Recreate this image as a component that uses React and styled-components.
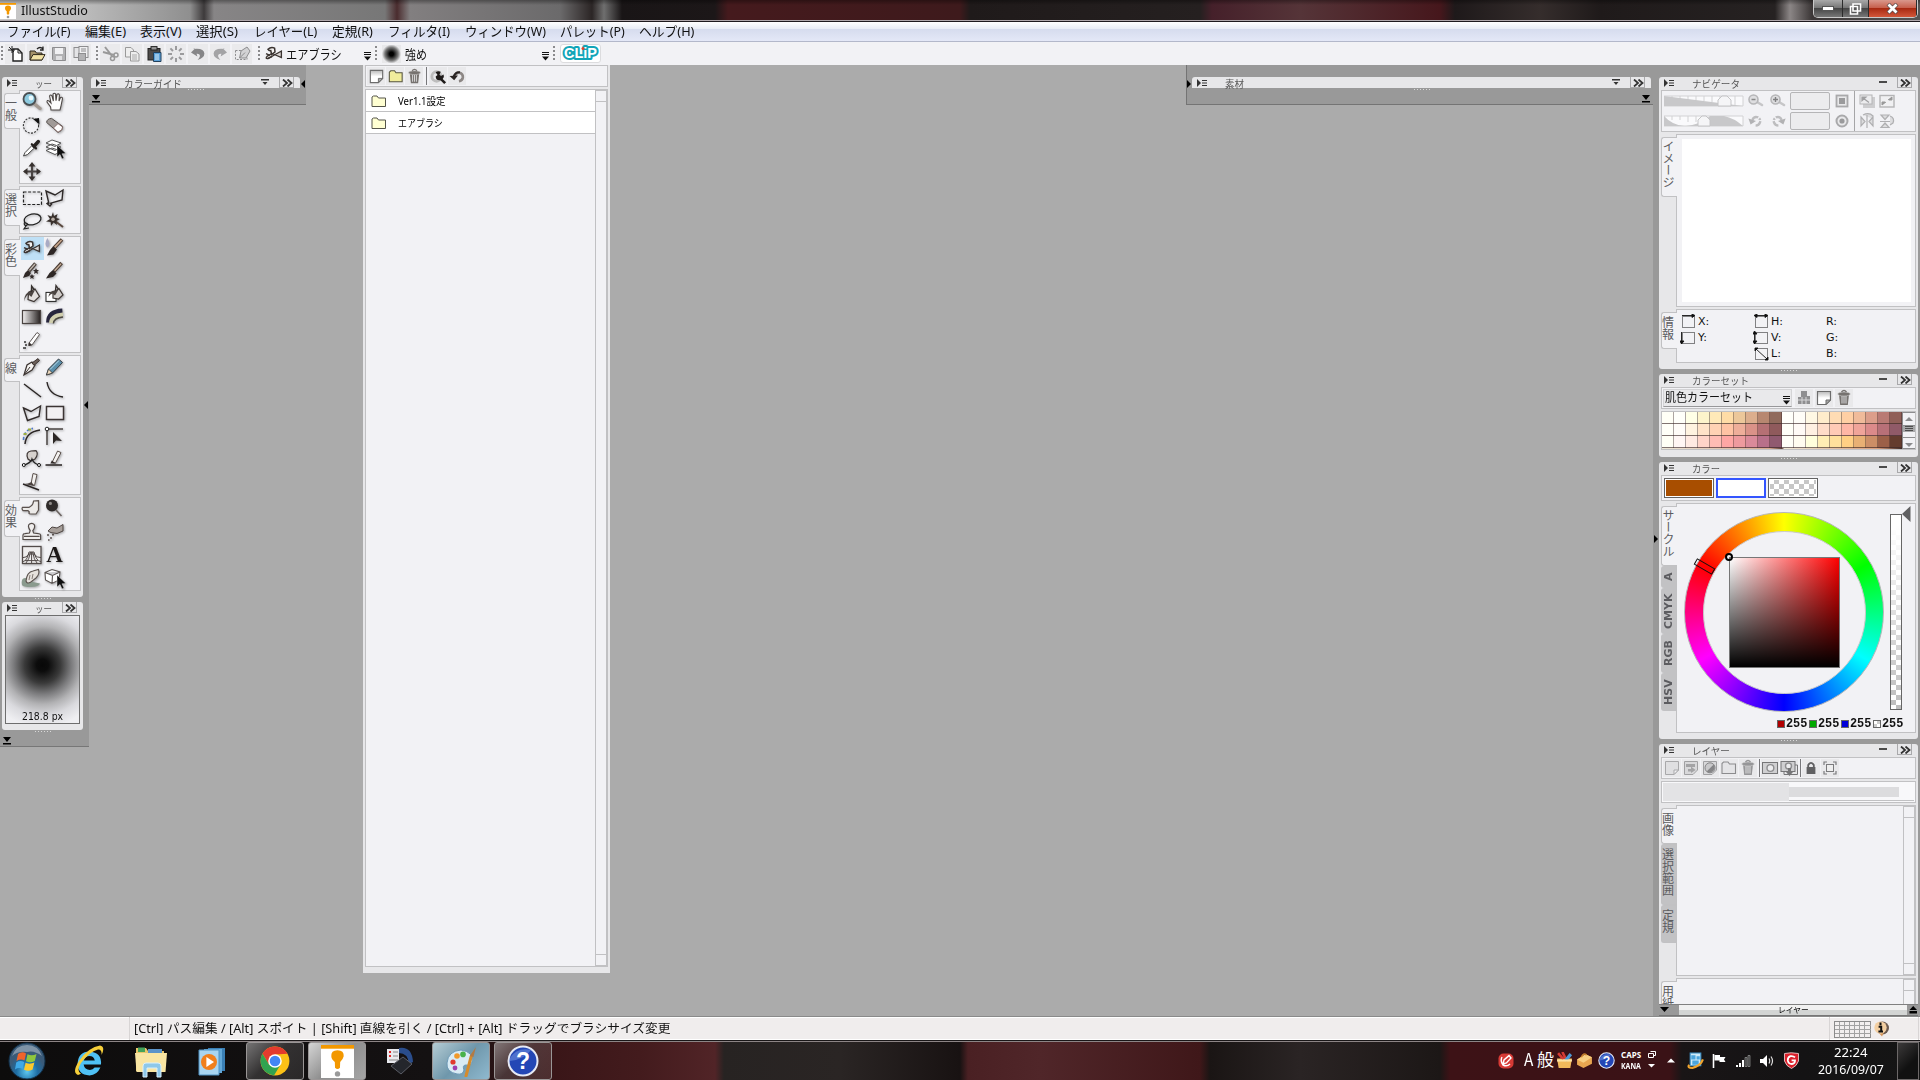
import React from "react";
import styled, { createGlobalStyle, css } from "styled-components";

const FONT = `"Noto Sans", "Noto Sans CJK JP", sans-serif`;
const JP = `"Noto Sans CJK JP", sans-serif`;
const LINE = "#c1c1c3";
const FACE = "#f2f2f5";

/* ---------- data ---------- */

const menus = [
  ["ファイル(F)", 64, 8],
  ["編集(E)", 41, 14],
  ["表示(V)", 42, 14],
  ["選択(S)", 42, 14],
  ["レイヤー(L)", 63, 16],
  ["定規(R)", 41, 15],
  ["フィルタ(I)", 62, 15],
  ["ウィンドウ(W)", 81, 15],
  ["パレット(P)", 65, 14],
  ["ヘルプ(H)", 55, 14],
];

const toolGroups = [
  {
    name: "一般",
    tab: 36,
    tools: ["search", "hand", "rotate", "eraser", "dropper", "layerPick", "move"],
  },
  { name: "選択", tab: 37, tools: ["marquee", "polyLasso", "lasso", "wand"] },
  {
    name: "彩色",
    tab: 37,
    active: "airbrush",
    tools: [
      "airbrush",
      "wetBrush",
      "sparkBrush",
      "brush",
      "bucket",
      "bucketShape",
      "gradient",
      "arcRibbon",
      "marker",
    ],
  },
  {
    name: "線",
    tab: 24,
    tools: [
      "pen",
      "pencil",
      "line",
      "curve",
      "polygon",
      "rect",
      "curveRuler",
      "pathCursor",
      "pathHand",
      "cutLine",
      "trim",
    ],
  },
  {
    name: "効果",
    tab: 37,
    tools: ["finger", "dodge", "stamp", "dust", "mesh", "text", "smudge", "cube"],
  },
];

const swatches = [
  "fffff6 fffffa ffffe6 fdf4cb ffe9b8 ffdca6 ecc79a dcae8d b78770 906a5c fffffa fffdf8 fff8e4 ffeccb ffdcb4 ffcfa4 f0bb9a dc9e8a b97a74 905f58",
  "fffff8 fffcf8 fff3e0 ffe3c8 ffd2b4 ffc3a4 eeae9a da9288 b57074 8f5a5c fffff8 fffaf6 fff0e2 ffdcc8 ffcab6 ffb6a6 f0a49a dc8a8a b87078 905a68",
  "fffff6 fff6f4 ffeae2 ffd4c8 ffbcb4 ffa6a4 ee9a9e da8a9a b8708a 905a70 fffff8 fffcf0 ffffdc ffeeb4 ffe09c ffcf84 e8b074 cc8e66 9c6048 643c2e",
].map((row) => row.split(" "));

/* ---------- icons ---------- */

const cursor = (
  <path d="M13 8 L13 20 L16 17.5 L18 22 L20 21 L18 16.8 L22 16.5 Z" fill="#111" stroke="#fff" strokeWidth=".4" />
);

const toolIcons = {
  search: (
    <>
      <path d="M13.5 13 L19 17.5" stroke="#a39a92" strokeWidth="3.4" strokeLinecap="round" />
      <circle cx="8.5" cy="8" r="6" fill="#8ecbe0" stroke="#4a5053" strokeWidth="1.8" />
      <circle cx="10" cy="7" r="2.4" fill="#e8f8fc" />
    </>
  ),
  hand: (
    <path
      d="M7 19 L6.6 16 L3 11 Q3 8.6 5 10 L7 12 L5.6 5 Q6.5 3 8 5 L9.4 10 L9 3 Q10.4 1.4 11.6 3 L12 9.6 L13 3.4 Q14.6 2 15.4 4 L15 10 L16.6 6.4 Q18.6 5.6 18.4 8 L16.8 16 L16 19 Z"
      fill="#fdfdfd"
      stroke="#4c4644"
      strokeWidth="1.1"
    />
  ),
  rotate: (
    <>
      <circle cx="10" cy="11.5" r="7.6" fill="none" stroke="#333" strokeWidth="1.1" strokeDasharray="2 1.3" />
      <path d="M12 5 L18 4 L18.5 10.5 Z" fill="#111" />
    </>
  ),
  eraser: (
    <>
      <path d="M2.6 8.4 Q3 4.6 7.6 4.4 L18.6 12.4 Q19.4 16 14 18.4 Z" fill="#a19b98" stroke="#544f4c" />
      <path d="M9.4 14 L14 9.6 L18.6 13 Q19 16 14 18.2 Z" fill="#fff" stroke="#7a5a58" strokeWidth=".8" />
    </>
  ),
  dropper: (
    <>
      <path d="M2.5 19 L4 15.6 L11.5 8 L14 10.4 L6.4 17.6 Z" fill="#fff" stroke="#444" />
      <path d="M10.8 7.2 L15 11.4" stroke="#262220" strokeWidth="2.2" strokeLinecap="round" />
      <path d="M13 9.2 L17.2 4.6" stroke="#262220" strokeWidth="3.6" strokeLinecap="round" />
    </>
  ),
  layerPick: (
    <>
      <path d="M2 13.5 L8 11 L17 14 L11 17.5 Z M2 10 L8 7 L17 10 L11 13.5 Z M2 6 L8 3 L17 6 L11 9.5 Z" fill="#fff" stroke="#555" />
      {cursor}
    </>
  ),
  move: (
    <>
      <path d="M11 4 V19 M3.5 11.5 H18.5" stroke="#4a4544" strokeWidth="2.2" />
      <path d="M11 2 L14.5 6.5 H7.5 Z M11 21 L14.5 16.5 H7.5 Z M2 11.5 L6.5 8 V15 Z M20 11.5 L15.5 8 V15 Z" fill="#37312f" />
    </>
  ),
  marquee: <rect x="2.5" y="5" width="18" height="12.5" fill="none" stroke="#222" strokeWidth="1.2" strokeDasharray="3 1.6" />,
  polyLasso: (
    <path d="M5 17 L2 4 L11 8 L19 3 L18 13 L6 16.4 M5 15 L3 16.5 L6 19 L8 16.5" fill="none" stroke="#2d2827" strokeWidth="1.4" />
  ),
  lasso: (
    <>
      <ellipse cx="11.5" cy="9.5" rx="8.5" ry="5.4" transform="rotate(-12 11 9)" fill="none" stroke="#222" strokeWidth="1.3" />
      <path d="M4 12 Q2 14 5 16 Q8 14 5 13 M5 16 L3 19 L8 18" fill="none" stroke="#222" strokeWidth="1.2" />
    </>
  ),
  wand: (
    <>
      <path d="M11 11 L19 17" stroke="#5b4a40" strokeWidth="2" />
      <path d="M9 2 L10 6 L13.6 4 L12.4 8 L16 9 L12.4 11 L13 15 L9.6 12.4 L7 16 L6.6 12 L2 11.6 L6 9 L3.4 5 L7.4 6.4 Z" fill="#38302c" />
      <circle cx="9" cy="9.2" r="1.8" fill="#b8aea6" />
    </>
  ),
  airbrush: (
    <>
      <path d="M9 10.5 L18.4 14.6 V8 L5 15.6 Q1.6 16 4.4 13 Z" fill="#d8d3d1" stroke="#3a3330" strokeWidth="1.3" />
      <path d="M5 6.4 Q8 3.4 11.6 5.2 L12 9 L8.6 11.4 L7.8 7.6 Q6 8 5 6.4 Z" fill="#f4f2f1" stroke="#3a3330" strokeWidth="1.5" />
      <path d="M3 10.6 L7 12.4 M4.6 15.6 L9 13.6" stroke="#3a3330" strokeWidth="1.4" />
    </>
  ),
  wetBrush: (
    <>
      <path d="M3.4 1 Q-.5 8 3.4 10.4 Q7.4 8 3.4 1" fill="#a9abc4" />
      <path d="M10 11 L18 2.6" stroke="#4b3a31" strokeWidth="3.6" />
      <path d="M10.6 10.4 L17.6 3" stroke="#c9a78c" strokeWidth="1.6" />
      <path d="M9 9.4 L13 12.6 L9.4 17.4 L3 18.4 L6 13 Z" fill="#2e2725" />
    </>
  ),
  sparkBrush: (
    <>
      <path d="M8 11 L14.5 3.5" stroke="#4b423c" strokeWidth="3.6" />
      <path d="M8.4 10.4 L14 4" stroke="#c4bab2" strokeWidth="1.4" />
      <path d="M7 10 L10 13 L8 16 L2 18 L4 13 Z" fill="#2e2725" />
      <path d="M15 8 l1 2 2 0 -1.6 1.5 .6 2.5 -2-1.3 -2 1.3 .6-2.5 -1.6-1.5 2 0z M11 14 l.8 1.6 2 .2 -1.6 1.2 .5 2 -1.8-1 -1.7 1 .5-2 -1.6-1.2 2-.2z" fill="#332b29" />
    </>
  ),
  brush: (
    <>
      <path d="M10 11.4 L17.6 3" stroke="#4a3a31" strokeWidth="3.6" />
      <path d="M10.6 10.8 L17.2 3.6" stroke="#c9b19c" strokeWidth="1.4" />
      <path d="M9 10 L12.5 13.5 L9 17 L2 18.4 L5.5 13 Z" fill="#2e2725" />
    </>
  ),
  bucket: (
    <>
      <path d="M7.6 9.4 L14 6 L18.5 13.4 L13 18.6 L7 16.6 Z" fill="#e3e0de" stroke="#3d3633" strokeWidth="1.2" />
      <path d="M3 18.4 Q3.4 9 10 8.6 L14 7 L10.4 14 L7.4 11.4 Q4.6 13 3 18.4 Z" fill="#4c4542" />
      <path d="M10.4 9 L10.6 3 L13.4 7" fill="none" stroke="#35302d" strokeWidth="1.4" />
    </>
  ),
  bucketShape: (
    <>
      <rect x="2" y="9.4" width="10" height="9" fill="#fff" stroke="#222" />
      <path d="M9 9.4 L15 5.6 L19 12 L14.6 16 L9 15 Z" fill="#d2cecb" stroke="#3d3633" strokeWidth="1.2" />
      <path d="M4.4 14 Q5 8 11 7.6 L14.6 6.6 L11 12.6 L8.4 10.4 Q6 11 4.4 14 Z" fill="#4c4542" />
      <path d="M11.4 8 L12 2.6 L14.6 6.4" fill="none" stroke="#35302d" strokeWidth="1.3" />
    </>
  ),
  gradient: <rect x="1.5" y="4.5" width="18" height="13" fill="url(#gradFill)" stroke="#4a4341" strokeWidth="1.2" />,
  arcRibbon: (
    <>
      <path d="M4.6 16.4 Q4.6 5.6 18.4 5" fill="none" stroke="#26253c" strokeWidth="5" />
      <path d="M7 17 Q7.4 9.4 19 8.4" fill="none" stroke="#d0ceae" strokeWidth="4" />
      <path d="M9.4 17.6 Q9.6 12 19 11" fill="none" stroke="#4b4840" strokeWidth="1.4" />
    </>
  ),
  marker: (
    <>
      <path d="M8 14 L16 3.5 L18.5 5.5 L11 16 L8 16.6 Z" fill="#fff" stroke="#5e5755" />
      <path d="M8 13 L11 16 L7.4 17 Z" fill="#332d2b" />
      <path d="M3 13 h2 M4 16 h2 M2 19 h3" stroke="#333" strokeWidth="1.6" />
    </>
  ),
  pen: (
    <>
      <path d="M3 19 L6 9 L11 6 L14 9 L11 14 Z" fill="#f5f3f1" stroke="#3a322f" strokeWidth="1.2" />
      <path d="M3 19 L9 11" stroke="#3a322f" />
      <path d="M11 7 L17 2.6 L18.5 4.6 L13 9.4 Z" fill="#6b5f59" stroke="#3a322f" />
    </>
  ),
  pencil: (
    <>
      <path d="M2.5 19 L4.5 13 L14.5 3 L18.5 6.5 L8.5 17 Z" fill="#5b8fab" stroke="#333a40" />
      <path d="M2.5 19 L4.5 13 L8.5 17 Z" fill="#ecd8bd" stroke="#333" strokeWidth=".8" />
      <path d="M6 13.5 L15 4.5" stroke="#b9dbe9" />
    </>
  ),
  line: <path d="M3 5 L20 18" stroke="#2a2524" strokeWidth="1.4" />,
  curve: <path d="M3 3 Q5 16 19 18" fill="none" stroke="#2a2524" strokeWidth="1.4" />,
  polygon: <path d="M2.5 6 L10 9.5 L19.5 4 L18 14.5 L6.5 18.5 Z" fill="none" stroke="#322c2b" strokeWidth="1.4" />,
  rect: <rect x="2.5" y="4.5" width="17" height="13" fill="#f2f0f2" stroke="#3c3534" strokeWidth="1.5" />,
  curveRuler: (
    <>
      <path d="M4 19 Q5 7 19 5" fill="none" stroke="#2a2524" strokeWidth="1.5" />
      <path d="M2.5 15 Q2.6 5 12 3.4" fill="none" stroke="#4f7ac6" strokeWidth="1.6" strokeDasharray="3 2" />
      <path d="M2.6 9 h3 M7 4.6 h3" stroke="#9dae3e" strokeWidth="2" />
    </>
  ),
  pathCursor: (
    <>
      <path d="M3 4 V20 M3 4 H19" stroke="#4b4543" strokeWidth="1.5" />
      <circle cx="3" cy="4" r="1.8" fill="#fff" stroke="#222" />
      <path d="M9 7 V19 L12 15.5 L18 16 Z" fill="#2c2725" />
    </>
  ),
  pathHand: (
    <>
      <path d="M7 11 Q4 4 10 3 L15 2.6 Q18 6 14 11 L10 13 Z" fill="#d6d1cd" stroke="#3d3533" strokeWidth="1.2" />
      <path d="M2 17.5 Q10 15 11 11 Q13 16 18.5 17" fill="none" stroke="#222" strokeWidth="1.2" />
      <circle cx="2.8" cy="17" r="1.5" fill="#fff" stroke="#111" />
      <circle cx="18" cy="17" r="1.5" fill="#fff" stroke="#111" />
    </>
  ),
  cutLine: (
    <>
      <path d="M1.5 17 H18" stroke="#272221" strokeWidth="1.5" />
      <path d="M8 14.5 L13.6 3 L17 4.6 L11.5 15 Z" fill="#f3f1ef" stroke="#5a504b" />
      <path d="M7.8 12.6 L12 15.6 H6.4 Z" fill="#332c2a" />
    </>
  ),
  trim: (
    <>
      <path d="M2 13 L18 19" stroke="#272221" strokeWidth="1.4" />
      <path d="M10 13 L12 2.5 L16 3.6 L13.5 14.5 Z" fill="#f3f1ef" stroke="#5a504b" />
      <path d="M3 13 Q7 13 10.6 11 L13.2 15 Z" fill="#4b423f" />
    </>
  ),
  finger: (
    <path
      d="M1.5 9.4 H8 L10 8 Q12 7 12.6 3 L17.5 2.6 V12 L15 16 H9.4 Q7 15.6 8.4 14 L7 12.6 H2 Q.4 10.6 1.5 9.4 Z"
      fill="#eceae8"
      stroke="#5b524e"
      strokeWidth="1.2"
    />
  ),
  dodge: (
    <>
      <path d="M12 12 L17.5 18" stroke="#6c6461" strokeWidth="1.6" />
      <circle cx="8" cy="7.4" r="6" fill="#2f2b2a" />
      <circle cx="6.4" cy="5.4" r="1.6" fill="#8e8a88" />
    </>
  ),
  stamp: (
    <path
      d="M2 18.5 V14 Q2 12.6 4 12.6 L8.4 12 L9.2 9.6 Q6 4.5 8.6 3 Q11.4 1.4 13.2 3.6 Q14.6 6.4 11.8 9.6 L12.6 12 L17.4 12.6 Q19.6 12.8 19.6 14 V18.5 Z M3 15.4 H18.6"
      fill="#f0eeed"
      stroke="#544c49"
      strokeWidth="1.2"
    />
  ),
  dust: (
    <>
      <path d="M4 10 L8 6 L13 7 L19 3.5 V10 L13 12.5 L7 11.6 Z" fill="#a79f9a" stroke="#4f4643" />
      <path d="M3 14 h2 M6 17 h2 M8 13.6 h2 M4 19 h1.6" stroke="#5b524f" strokeWidth="1.6" />
    </>
  ),
  mesh: (
    <>
      <rect x="1.5" y="2.5" width="18.5" height="17" fill="#efeeee" stroke="#524b49" strokeWidth="1.3" />
      <path
        d="M2 17.6 Q6 17 8 8 H13 Q15 17 20 17.6 M5 19 Q8 16 9.6 8 M16 19 Q13 16 11.6 8 M10.6 8 V19 M2 13.6 Q5 14 8 10 H13 Q16 14 20 13.6 M4 16.6 H17"
        fill="none"
        stroke="#524b49"
      />
    </>
  ),
  text: (
    <text x="10.5" y="18" textAnchor="middle" fontFamily="Liberation Serif, serif" fontWeight="bold" fontSize="23" fill="#1c1817">
      A
    </text>
  ),
  smudge: (
    <>
      <path d="M1 18 Q-.6 10 6 11 Q12 12 12 15 L19 16.6 Q18 20 10 20 Q2 20 1 18" fill="#8a9a8e" />
      <path d="M5 14 Q6 5 12 4 L17.5 2.5 Q19 7 15 11 L9 15.6 Q6 17 5 14 Z" fill="#e6e1dc" stroke="#5b524e" strokeWidth="1.1" />
      <path d="M9 8 L8 13 M12 7 L11 12" stroke="#6c625d" strokeWidth=".8" />
    </>
  ),
  cube: (
    <>
      <path d="M1 5.5 L8 2.5 L16 5 L15 13 L8 16.5 L1.5 13 Z M1 5.5 L8.5 8.5 L16 5 M8.5 8.5 L8 16.5" fill="#fff" stroke="#5a5452" strokeWidth="1.1" />
      {cursor}
    </>
  ),
};

// 20x20 command icons
const page = "M3.5 3.5 H16.5 V12 L12 16.5 H3.5 Z";
const trashIcon = (c) => (
  <>
    <path d="M5 6.5 L6.2 17 H13.8 L15 6.5 Z" fill={c} />
    <path d="M8 8 V15.5 M10 8 V15.5 M12 8 V15.5" stroke="#e6e6e8" strokeWidth=".9" />
    <ellipse cx="10" cy="6" rx="6.4" ry="2" fill={c} stroke="#ddd" strokeWidth=".5" />
    <path d="M7.5 4 Q10 1 12.5 4" stroke={c} strokeWidth="1.4" fill="none" />
  </>
);

const icons = {
  newFile: (
    <>
      <path d="M8 5 H13 L17 9 V17 H8 Z" fill="#fff" stroke="#222" strokeWidth="1.4" />
      <path d="M13 5 V9 H17" fill="none" stroke="#222" />
      <path d="M4 3 L9 8 M7 2 V9 M3 6 H10" stroke="#222" strokeWidth="1" />
    </>
  ),
  open: (
    <>
      <path d="M3 16 V7 H8 L9.5 9 H15 V16 Z" fill="#a5936a" stroke="#2e281c" />
      <path d="M3 16 L6 10.6 H18 L15 16 Z" fill="#f2e3a6" stroke="#2e281c" />
      <path d="M10 5 Q13 2 16 5 M16 2.6 V6 H13" fill="none" stroke="#222" strokeWidth="1.3" />
    </>
  ),
  save: (
    <>
      <path d="M3.5 3.5 H16.5 V16.5 H4.5 L3.5 15.5 Z" fill="#b2b2b4" stroke="#8d8d8f" />
      <rect x="6" y="4" width="8" height="6" fill="#f1f1f3" />
      <rect x="7" y="12" width="6" height="4" fill="#e0e0e2" />
    </>
  ),
  saveAll: (
    <>
      <rect x="3" y="3.5" width="9" height="10" fill="#e4e4e6" stroke="#8d8d8f" />
      <rect x="8" y="2.5" width="9" height="11" fill="#efeff1" stroke="#8d8d8f" />
      <rect x="7.5" y="9.5" width="7" height="7" fill="#b2b2b4" stroke="#8d8d8f" />
      <path d="M10 5 h5 M10 7 h5" stroke="#8d8d8f" />
    </>
  ),
  cut: (
    <>
      <path d="M5 3 L12 12 M3 8 L14 11" stroke="#999" strokeWidth="2" />
      <circle cx="12.5" cy="14.5" r="2" fill="none" stroke="#999" strokeWidth="1.5" />
      <circle cx="16" cy="11" r="2" fill="none" stroke="#999" strokeWidth="1.5" />
    </>
  ),
  copy: (
    <>
      <path d="M3.5 3.5 H9 L11.5 6 V13 H3.5 Z" fill="#eee" stroke="#999" />
      <path d="M8.5 7.5 H14 L17 10 V17 H8.5 Z" fill="#eee" stroke="#999" />
      <path d="M10 11 h5 M10 13 h5 M10 15 h5" stroke="#aaa" />
    </>
  ),
  paste: (
    <>
      <rect x="4" y="4.5" width="12" height="11.5" fill="#4d4a49" stroke="#222" />
      <rect x="7" y="2.6" width="6" height="3.4" fill="#999" stroke="#222" />
      <path d="M9.5 8.5 H17 V17.5 H9.5 Z" fill="#5aa0d8" stroke="#22405c" />
      <path d="M11 11 h4 M11 13 h4 M11 15 h4" stroke="#d5ebfa" />
    </>
  ),
  burst: (
    <path
      d="M10 2 V6 M10 14 V18 M2 10 H6 M14 10 H18 M4.4 4.4 L7 7 M13 13 L15.6 15.6 M15.6 4.4 L13 7 M7 13 L4.4 15.6"
      stroke="#9b9b9d"
      strokeWidth="2"
    />
  ),
  undo: <path d="M5 5 Q16 3.6 16.4 9.6 Q16.4 14 9.6 16 Q13 12.6 11.4 10.6 Q10.4 9.6 8.6 9.8 L9.4 12.4 L3 8.6 L7 4.4 Z" fill="#868688" />,
  redo: <path d="M15 5 Q4 3.6 3.6 9.6 Q3.6 14 10.4 16 Q7 12.6 8.6 10.6 Q9.6 9.6 11.4 9.8 L10.6 12.4 L17 8.6 L13 4.4 Z" fill="#a3a3a5" />,
  deselect: (
    <>
      <path d="M3.5 6.5 H12 M3.5 6.5 V15.5 H15 V12" fill="none" stroke="#8c8c8e" strokeDasharray="2 1.4" />
      <path d="M7.6 14 L9 7 L15 3 L18 7 L14 14 Z" fill="#d2d2d4" stroke="#8c8c8e" />
      <path d="M7.6 14 L13 8.6" stroke="#8c8c8e" />
    </>
  ),
  pageNew: (
    <>
      <path d={page} fill="url(#pageFill)" stroke="#6c6c6c" strokeWidth="1.2" />
      <path d="M12 16.5 V12 H16.5 Z" fill="#a9a9a9" stroke="#6c6c6c" />
    </>
  ),
  folderOpen: <path d="M3.5 15.5 V5.5 L5 4 H9 L10.5 6 H17 V15.5 Z" fill="#f0ec9c" stroke="#55543f" strokeWidth="1.1" />,
  trash: trashIcon("#76726f"),
  wrench: (
    <>
      <circle cx="8" cy="10" r="5" fill="none" stroke="#bdbdbd" strokeWidth="3" />
      <path
        d="M7 5.6 Q9.6 3.6 12.4 5 L11 8 L12.6 9.6 L15.4 8 Q16.4 11 14.4 12.6 L18 16 L16 17.8 L12 14 Q7.4 14.6 7 10 L9 8.4 Z"
        fill="#1f1b1a"
      />
    </>
  ),
  reset: (
    <>
      <path d="M7 9.5 Q8.5 5.5 12 6 Q16 7 15.6 11 Q15 14.5 11.5 15" fill="none" stroke="#8c8684" strokeWidth="2.8" />
      <path d="M1.6 9.4 L10.5 9 L6.5 14 Z" fill="#2a2523" />
      <path d="M6 10 Q8 5 12.6 5.6" stroke="#2a2523" strokeWidth="2.2" fill="none" />
    </>
  ),
  palette: (
    <>
      <path d="M7 3 H13 V8 H16 V16 H4 V9 H7 Z" fill="#8f8f91" />
      <path d="M4 12 H16 M8 9 V16 M12 9 V16" stroke="#d8d8da" />
    </>
  ),
  gLayer: (
    <>
      <path d={page} fill="#dfdfe1" stroke="#a8a8aa" />
      <path d="M12 16.5 V12 H16.5 Z" fill="#f2f2f4" stroke="#a8a8aa" />
    </>
  ),
  gLayerArrow: (
    <>
      <path d={page} fill="#d8d8da" stroke="#a0a0a2" />
      <path d="M5 6 H14 V9 H5 Z M7 11 H10 V8.6 L14.6 12 L10 15 V13.4 H7 Z" fill="#a3a3a5" />
    </>
  ),
  gMask: (
    <>
      <path d={page} fill="#d8d8da" stroke="#a0a0a2" />
      <circle cx="10" cy="9.8" r="5" fill="#c9c9cb" stroke="#858587" />
      <path d="M6.6 13.4 L13.6 6.4 Q16 10 13 13 Q10 15.6 6.6 13.4" fill="#858587" />
    </>
  ),
  gFolder: <path d="M3 15.5 V5.5 L4.5 4 H9 L10.5 6 H16.5 V15.5 Z" fill="#e4e4e6" stroke="#8c8c8e" strokeWidth="1.1" />,
  gTrash: trashIcon("#969698"),
  gMaskBox: (
    <>
      <rect x="2.5" y="4.5" width="15" height="11" fill="#cfcfd1" stroke="#757577" />
      <circle cx="10.4" cy="10" r="3.4" fill="#ececee" stroke="#8e8e90" strokeWidth="1.4" />
    </>
  ),
  gMaskStack: (
    <>
      <path d="M5 7 H18.5 V16.5 H5 Z" fill="#e6e6e8" stroke="#757577" />
      <rect x="2" y="3.5" width="14" height="10" fill="#cfcfd1" stroke="#757577" />
      <circle cx="9.5" cy="8" r="3" fill="#ececee" stroke="#8e8e90" strokeWidth="1.4" />
      <path d="M9 10 H12 V14 H14 L10.5 18 L7 14 H9 Z" fill="#757577" />
    </>
  ),
  lock: (
    <>
      <rect x="5.6" y="9" width="8.8" height="7" fill="#606062" />
      <path d="M7.2 9 V7 Q10 2.6 12.8 7 V9" fill="none" stroke="#606062" strokeWidth="1.8" />
    </>
  ),
  lockAlpha: (
    <>
      <rect x="6.5" y="6.5" width="7" height="7" fill="#eee" stroke="#7b7b7d" />
      <path d="M4 7 V4 H7 M13 4 H16 V7 M16 13 V16 H13 M7 16 H4 V13" fill="none" stroke="#7b7b7d" strokeWidth="1.2" />
    </>
  ),
  zoomOut: (
    <>
      <path d="M11 11 L16 14" stroke="#c6c6c8" strokeWidth="2.6" strokeLinecap="round" />
      <circle cx="7.5" cy="8.5" r="4.5" fill="#dedee0" stroke="#b6b6b8" strokeWidth="1.6" />
      <path d="M5.5 8.5 H9.5" stroke="#888" strokeWidth="1.4" />
    </>
  ),
  zoomIn: (
    <>
      <path d="M11 11 L16 14" stroke="#c6c6c8" strokeWidth="2.6" strokeLinecap="round" />
      <circle cx="7.5" cy="8.5" r="4.5" fill="#dedee0" stroke="#b6b6b8" strokeWidth="1.6" />
      <path d="M5 8.5 H10 M7.5 6 V11" stroke="#808082" strokeWidth="1.4" />
    </>
  ),
  rotL: (
    <>
      <path d="M6.4 9 Q8 5 12 6.4 Q15 8.4 14 11.4 Q13 14.4 9.6 14.6" fill="none" stroke="#bdbdbf" strokeWidth="2.4" strokeDasharray="7 1.2 2 1.2" />
      <path d="M2.4 7.6 L10 10 L4.6 13.4 Z" fill="#b2b2b4" />
    </>
  ),
  rotR: (
    <>
      <path d="M13.6 9 Q12 5 8 6.4 Q5 8.4 6 11.4 Q7 14.4 10.4 14.6" fill="none" stroke="#bdbdbf" strokeWidth="2.4" strokeDasharray="7 1.2 2 1.2" />
      <path d="M17.6 7.6 L10 10 L15.4 13.4 Z" fill="#b2b2b4" />
    </>
  ),
  fitBox: (
    <>
      <rect x="4.5" y="4.5" width="11" height="11" fill="#e8e8ea" stroke="#a9a9ab" strokeWidth="1.8" />
      <rect x="7" y="7" width="6" height="6" fill="#9a9a9c" />
    </>
  ),
  fitDot: (
    <>
      <circle cx="10" cy="10" r="5.5" fill="#e8e8ea" stroke="#a9a9ab" strokeWidth="2" />
      <circle cx="10" cy="10" r="2.6" fill="#9a9a9c" />
    </>
  ),
  scaleA: (
    <>
      <path d="M6 6 H18 V17 H6 Z" fill="#cdcdcf" />
      <rect x="3" y="4" width="12" height="9" fill="#ececee" stroke="#b4b4b6" />
      <path d="M5.4 6.4 L12 11.4 M5 6 h4 l-4 3.6z" stroke="#a0a0a2" fill="#a0a0a2" strokeWidth="1.2" />
    </>
  ),
  scaleB: (
    <>
      <rect x="3" y="4.5" width="14" height="11.5" fill="#f0f0f2" stroke="#b4b4b6" strokeWidth="1.4" />
      <path d="M5 14 L9 11 M5 14 v-3 h3 z M15 6 v3 h-3 z M15 6 L11 9" fill="#999" stroke="#999" />
    </>
  ),
  flipH: (
    <path d="M10 4 V17 M4 6 L8 10.5 L4 15 Z M16 6 L12 10.5 L16 15 Z M6 4 Q12 1 16 5 V8" fill="#dcdcde" stroke="#b0b0b2" strokeWidth="1.2" />
  ),
  flipV: (
    <path d="M3 10.5 H13 M4 4 H12 L8 8.5 Z M4 16.5 H12 L8 12 Z M13 5 Q18 7 16 12 L13 14" fill="#dcdcde" stroke="#b0b0b2" strokeWidth="1.2" />
  ),
};

const Icon = ({ name, size = 20 }) => (
  <svg width={size} height={size} viewBox="0 0 20 20">
    {icons[name]}
  </svg>
);

const Marks = {
  menu: (
    <svg width="11" height="8" viewBox="0 0 11 8">
      <path d="M0 0 L4 4 L0 8 Z M5 1 h5 v1 h-5z M5 3.5 h5 v1 h-5z M5 6 h5 v1 h-5z" fill="#333" />
    </svg>
  ),
  more: (
    <svg width="11" height="8" viewBox="0 0 11 8">
      <path d="M1 0.5 L5 4 L1 7.5 M5.5 .5 L9.5 4 L5.5 7.5" stroke="#333" strokeWidth="1.8" fill="none" />
    </svg>
  ),
  drop: (
    <svg width="8" height="9" viewBox="0 0 8 9">
      <path d="M0 0 h7 v1 h-7z M0 2 h7 v1 h-7z M0 4.5 h7 L3.5 8.5z" fill="#111" />
    </svg>
  ),
  funnel: (
    <svg width="8" height="7" viewBox="0 0 8 7">
      <path d="M0 0 h8 v1.4 h-8z M1.5 3 h5 L4 6z" fill="#333" />
    </svg>
  ),
  expand: (
    <svg width="8" height="8" viewBox="0 0 8 8">
      <path d="M0 0 h8 L4 5z M0 6 h8 v1.6 h-8z" fill="#000" />
    </svg>
  ),
  left: (
    <svg width="4" height="8" viewBox="0 0 4 8">
      <path d="M4 0 V8 L0 4z" fill="#000" />
    </svg>
  ),
  right: (
    <svg width="4" height="8" viewBox="0 0 4 8">
      <path d="M0 0 V8 L4 4z" fill="#000" />
    </svg>
  ),
};

/* ---------- small parts ---------- */

// squeezes or stretches one line of text to the given width
const Fit = ({ w, children }) => {
  const ref = React.useRef(null);
  const [scale, setScale] = React.useState(1);

  React.useLayoutEffect(() => {
    setScale(w / ref.current.offsetWidth);
  }, [w, children]);

  return (
    <FitBox $w={w}>
      <FitInner ref={ref} style={{ transform: `scaleX(${scale})` }}>
        {children}
      </FitInner>
    </FitBox>
  );
};

const PanelHeader = ({ title, w, small, collapsed }) => (
  <Header $collapsed={collapsed} $small={small}>
    {Marks.menu}
    <HeaderTitle>
      <Fit w={w}>{title}</Fit>
    </HeaderTitle>
    {!small && (collapsed ? Marks.funnel : <Minus />)}
    <MoreButton $small={small}>{Marks.more}</MoreButton>
  </Header>
);

const DotGrip = () => (
  <Dots>
    {[0, 1, 2, 3, 4, 5].map((n) => (
      <i key={n} />
    ))}
  </Dots>
);

const Scroll = () => (
  <ScrollTrack>
    <ScrollCap />
    <ScrollCap />
  </ScrollTrack>
);

/* ---------- sections ---------- */

const ToolPanel = () => (
  <Panel $h={520}>
    <PanelHeader title="ッー" w={17} small />
    <Groups>
      {toolGroups.map((group) => (
        <TabRow key={group.name}>
          <TabCol>
            <Tab $h={group.tab}>{group.name}</Tab>
          </TabCol>
          <ToolBox>
            {group.tools.map((tool) => (
              <ToolCell key={tool} $active={group.active === tool}>
                <svg width="23" height="23" viewBox="0 0 23 23" fill="none">
                  {toolIcons[tool]}
                </svg>
              </ToolCell>
            ))}
          </ToolBox>
        </TabRow>
      ))}
    </Groups>
  </Panel>
);

const LeftDock = () => (
  <LeftDockBox>
    <ToolPanel />
    <DotGrip />
    <Panel $h={128}>
      <PanelHeader title="ッー" w={17} small />
      <BrushPreview>
        <Fit w={41}>218.8 px</Fit>
      </BrushPreview>
    </Panel>
    <DotGrip />
    <DockFoot>{Marks.expand}</DockFoot>
    <EdgeArrow $x={84} $y={336}>
      {Marks.left}
    </EdgeArrow>
  </LeftDockBox>
);

const PresetWindow = () => (
  <PresetBox>
    <PresetTools>
      {["pageNew", "folderOpen", "trash"].map((n) => (
        <SmallCell key={n}>
          <Icon name={n} size={19} />
        </SmallCell>
      ))}
      <Separator $gap={2} />
      {["wrench", "reset"].map((n) => (
        <SmallCell key={n}>
          <Icon name={n} size={19} />
        </SmallCell>
      ))}
    </PresetTools>
    <PresetList>
      <PresetRows>
        {[
          ["Ver1.1設定", 48],
          ["エアブラシ", 45],
        ].map(([label, w]) => (
          <PresetRow key={label}>
            <svg width="16" height="13" viewBox="0 0 16 13">
              <path d="M1 11.5 V2 L2.5 1 H6 L7.5 3 H14.5 V11.5 Z" fill="#ffffd2" stroke="#55554a" />
            </svg>
            <Fit w={w}>{label}</Fit>
          </PresetRow>
        ))}
      </PresetRows>
      <Scroll />
    </PresetList>
  </PresetBox>
);

const Navigator = () => (
  <Panel $h={292}>
    <PanelHeader title="ナビゲータ" w={48} />
    <NavTools>
      <NavLeft>
        <NavLine>
          <svg width="80" height="12" viewBox="0 0 80 12">
            <path d="M0 1 H79 V11 H0 Z M8 1v4 M16 1v4 M24 1v4 M32 1v5 M40 1v5 M48 1v6 M56 1v7 M71 1v9" fill="#fafafc" stroke="#d2d2d4" />
            <path d="M0 1 L79 11 H0 Z" fill="#c8c8ca" />
            <path d="M54 11 V5 L58 1 H63 L67 5 V11 Z" fill="#f5f5f7" stroke="#c4c4c6" />
          </svg>
          <Icon name="zoomOut" />
          <Icon name="zoomIn" />
          <NavField />
          <Icon name="fitBox" />
        </NavLine>
        <NavLine>
          <svg width="80" height="12" viewBox="0 0 80 12">
            <path d="M0 1 H79 V11 H0 Z M8 1v4 M16 1v4 M24 1v6 M32 1v6" fill="#fafafc" stroke="#d2d2d4" />
            <path d="M0 1 Q8 10 20 11 H0 Z M22 11 Q38 9 46 1 H60 Q70 3 79 11 Z" fill="#c8c8ca" />
            <path d="M34 11 V5 L38 1 H42 L46 5 V11 Z" fill="#f5f5f7" stroke="#c4c4c6" />
          </svg>
          <Icon name="rotL" />
          <Icon name="rotR" />
          <NavField />
          <Icon name="fitDot" />
        </NavLine>
      </NavLeft>
      <NavRight>
        {["scaleA", "scaleB", "flipH", "flipV"].map((n) => (
          <Icon key={n} name={n} />
        ))}
      </NavRight>
    </NavTools>
    <TabRow $h={173}>
      <TabCol>
        <Tab $h={60} $vertical>
          イメージ
        </Tab>
      </TabCol>
      <CanvasBox>
        <div />
      </CanvasBox>
    </TabRow>
    <TabRow $h={54}>
      <TabCol>
        <Tab $h={37}>情報</Tab>
      </TabCol>
      <InfoBox>
        {["X:", "H:", "R:", "Y:", "V:", "G:", "", "L:", "B:"].map((label, i) => (
          <InfoCell key={i}>
            {i % 3 !== 2 && label && <InfoMark kind={label} />}
            <span>{label}</span>
          </InfoCell>
        ))}
      </InfoBox>
    </TabRow>
  </Panel>
);

const infoPaths = {
  "X:": "M2 1.5 H14 M12 0 L15 1.5 L12 3.5 Z",
  "Y:": "M1.5 2 V14 M0 11 L1.5 14 L4 11 Z",
  "H:": "M2 1.5 H14 M12 0 L15 1.5 L12 3.5 Z M4 0 L1 1.5 L4 3.5 Z",
  "V:": "M1.5 2 V14 M0 11 L1.5 14 L4 11 Z M0 4 L1.5 1 L4 4 Z",
  "L:": "M3 3 L14 13 M2 2 h3 l-3 3z M15 14 h-3 l3 -3z",
};

const InfoMark = ({ kind }) => (
  <svg width="16" height="15" viewBox="0 0 16 15">
    <rect x="2.5" y="2.5" width="12" height="11" fill="none" stroke="#111" strokeDasharray="1 1" />
    <path d={infoPaths[kind]} fill="#111" stroke="#111" strokeWidth=".9" />
  </svg>
);

const ColorSet = () => (
  <Panel $h={83}>
    <PanelHeader title="カラーセット" w={57} />
    <SetTools>
      <SetSelect>
        <Fit w={88}>肌色カラーセット</Fit>
        {Marks.drop}
      </SetSelect>
      {["palette", "pageNew", "trash"].map((n) => (
        <SmallCell key={n}>
          <Icon name={n} />
        </SmallCell>
      ))}
    </SetTools>
    <SwatchBox>
      <SwatchGrid>
        {swatches.flat().map((c, i) => (
          <Swatch key={i} $c={`#${c}`} />
        ))}
        <SwatchRest />
      </SwatchGrid>
      <SwatchScroll>
        <svg width="12" height="37" viewBox="0 0 12 37">
          <path d="M0 12.5 h12 M0 24.5 h12" stroke="#8d8d8f" />
          <path d="M0 13 h12 v6 h-12z" fill="#a7a7a9" />
          <path d="M2 13.5h8 M2 15.5h8 M2 17.5h8" stroke="#444" strokeWidth=".9" />
          <path d="M2 8 L6 4 L10 8z M2 30 L6 34 L10 30z" fill="#8a8a8c" />
        </svg>
      </SwatchScroll>
    </SwatchBox>
  </Panel>
);

const ColorPanel = () => (
  <Panel $h={277}>
    <PanelHeader title="カラー" w={28} />
    <ChipBar>
      <Chip $bg="#a84e00" />
      <Chip $bg="#fff" $active />
      <Chip $checker />
    </ChipBar>
    <TabRow $h={230}>
      <TabCol>
        <Tab $h={60} $vertical>
          サークル
        </Tab>
        <SideTab $h={22}>A</SideTab>
        <SideTab $h={46}>CMYK</SideTab>
        <SideTab $h={39}>RGB</SideTab>
        <SideTab $h={38}>HSV</SideTab>
      </TabCol>
      <CircleBox>
        <WheelRow>
          <Wheel>
            <WheelHole>
              <ShadeSquare />
            </WheelHole>
            <HueMark />
            <ShadeMark />
          </Wheel>
          <AlphaBar />
          <svg width="9" height="16" viewBox="0 0 9 16">
            <path d="M8.5 0 V16 L0 8z" fill="#606062" />
          </svg>
        </WheelRow>
        <Values>
          {["#b00000", "#00a800", "#0000d8", ""].map((c) => (
            <Value key={c}>
              <ValueChip $c={c} />
              <Fit w={21}>255</Fit>
            </Value>
          ))}
        </Values>
      </CircleBox>
    </TabRow>
  </Panel>
);

const LayerPanel = () => (
  <Panel $h={260} $cut>
    <PanelHeader title="レイヤー" w={38} />
    <LayerTools>
      {["gLayer", "gLayerArrow", "gMask", "gFolder", "gTrash"].map((n) => (
        <SmallCell key={n}>
          <Icon name={n} />
        </SmallCell>
      ))}
      <Separator $gap={1} />
      {["gMaskBox", "gMaskStack"].map((n) => (
        <SmallCell key={n}>
          <Icon name={n} />
        </SmallCell>
      ))}
      <Separator $gap={1} />
      {["lock", "lockAlpha"].map((n) => (
        <SmallCell key={n}>
          <Icon name={n} />
        </SmallCell>
      ))}
    </LayerTools>
    <BlendBar>
      <BlendMode />
      <Opacity>
        <div />
      </Opacity>
    </BlendBar>
    <TabRow $h={171}>
      <TabCol>
        <Tab $h={36}>画像</Tab>
        <Tab $h={61} $off>
          選択範囲
        </Tab>
        <Tab $h={38} $off>
          定規
        </Tab>
      </TabCol>
      <ListBox>
        <Scroll />
      </ListBox>
    </TabRow>
    <TabRow $h={60}>
      <TabCol>
        <Tab $h={40}>用紙</Tab>
      </TabCol>
      <ListBox>
        <Scroll />
      </ListBox>
    </TabRow>
  </Panel>
);

const RightDock = () => (
  <RightDockBox>
    <Navigator />
    <DotGrip />
    <ColorSet />
    <DotGrip />
    <ColorPanel />
    <DotGrip />
    <LayerPanel />
    <DockStrip>
      <svg width="12" height="8" viewBox="0 0 12 8">
        <path d="M1 1 H10 L5.5 6z" fill="#000" />
      </svg>
      <StripBar>
        <Fit w={31}>レイヤー</Fit>
      </StripBar>
      <svg width="9" height="8" viewBox="0 0 9 8">
        <path d="M0.5 4 H8 L4.2 0z M.5 5 h7.5 v2.4 h-7.5z" fill="#000" />
      </svg>
    </DockStrip>
    <EdgeArrow $x={1} $y={470}>
      {Marks.right}
    </EdgeArrow>
  </RightDockBox>
);

const AppMark = ({ size = 15 }) => (
  <svg width={size} height={size} viewBox="0 0 32 32">
    <rect width="32" height="32" fill="#fff" />
    <rect width="32" height="3.6" fill="#f39800" />
    <path d="M16 5 Q22.5 5 22 11 Q21.4 14 18.6 16.5 L18.4 22 Q16 24.5 13.6 22 L13.4 16.5 Q10 14 10 11 Q9.5 5 16 5 Z" fill="#f39800" />
    <circle cx="16" cy="28" r="2.6" fill="#9a9a9a" />
  </svg>
);

const HelpMark = ({ size }) => (
  <svg width={size} height={size} viewBox="0 0 32 32">
    <circle cx="16" cy="16" r="14.5" fill="#2347b5" stroke="#e6eaf5" strokeWidth="2" />
    <path d="M3 13 Q10 2 24 5 Q18 14 3 16" fill="#6d8ddd" opacity=".6" />
    <text x="16" y="24" textAnchor="middle" fontFamily="Liberation Sans, sans-serif" fontWeight="bold" fontSize="23" fill="#fff">
      ?
    </text>
  </svg>
);

const TaskBar = () => (
  <Tasks>
    <TaskItem $w={54}>
      <svg width="38" height="38" viewBox="0 0 38 38">
        <circle cx="19" cy="19" r="18" fill="url(#orb)" stroke="#10304a" />
        <path d="M10 12 Q14 9 18 11.5 L16.5 18.5 Q12.5 16.5 8.5 19 Z" fill="#f0642b" />
        <path d="M19.5 12.3 Q24 14.5 28.5 12 L26.8 19 Q22.4 21.4 18 19.2 Z" fill="#8fc63d" />
        <path d="M8.2 20.4 Q12 18 16.2 20 L14.6 27 Q10.8 25 7 27.4 Z" fill="#3fa9e8" />
        <path d="M17.6 20.8 Q22 22.8 26.4 20.6 L24.6 27.6 Q20.4 30 16 27.8 Z" fill="#fcc92c" />
        <path d="M4 14 Q8 3 19 3 Q30 3 34 14 Q26 8 19 10 Q10 9 4 14" fill="#fff" opacity=".35" />
      </svg>
    </TaskItem>
    <TaskItem $w={70}>
      <svg width="32" height="32" viewBox="0 0 32 32">
        <path
          d="M28 19.6 H10.6 Q11.6 25 17 25 Q20 25 21.6 22.6 H27.4 Q24 30.4 16.5 30.4 Q4.6 30 4.6 18 Q5.6 6.4 16.5 6.4 Q29 7.4 28 19.6 Z M10.8 15.4 H21.8 Q20.8 11 16.4 11 Q12 11.2 10.8 15.4 Z"
          fill="#4fc1f5"
          fillRule="evenodd"
        />
        <path d="M5 30 Q-1.4 27.6 6 16 Q16 2 27 .6 Q32.6 1.6 28.6 10 Q29 4 25 4.4 Q16 7 8 18 Q3 26 8 28.8 Z" fill="#f6cf3a" />
      </svg>
    </TaskItem>
    <TaskItem $w={54}>
      <svg width="34" height="34" viewBox="0 0 34 34">
        <path d="M2 4 H12 L14 7 H30 V27 H2 Z" fill="#e9c66a" />
        <path d="M4 3.5 H11 V8 H4z" fill="#44a35a" />
        <path d="M14 5 H28 V9 H14z" fill="#5b93c9" />
        <path d="M1 9 H33 L31.5 28 H2.5 Z" fill="#f9e5a2" />
        <path d="M9 33 V22 Q9 19 12 19 H24 Q27 19 27 22 V33 H23 V24 H13 V33 Z" fill="#8ec8ea" stroke="#d9f0fc" />
      </svg>
    </TaskItem>
    <TaskItem $w={67}>
      <svg width="28" height="30" viewBox="0 0 28 30">
        <path d="M10 2 H27 V25 H10z" fill="#3a7fb5" />
        <path d="M6 3 H24 V27 H6z" fill="#63a8d8" />
        <path d="M1 4 H21 V29 H1z" fill="#a9d5f0" stroke="#4e91c2" />
        <circle cx="11" cy="16" r="8" fill="#f07f1c" />
        <path d="M8.4 11 V21 L16 16z" fill="#fff" />
      </svg>
    </TaskItem>
    <TaskButton>
      <svg width="32" height="32" viewBox="0 0 32 32">
        <circle cx="16" cy="16" r="14.4" fill="#fbc116" />
        <path d="M3.5 8.8 A14.4 14.4 0 0 1 28.5 8.8 L16 9.4 L10 19.6 Z" fill="#e33b2e" />
        <path d="M3.5 8.8 A14.4 14.4 0 0 0 15 30.4 L21.6 19.4 L10 19.6 Z" fill="#31a350" />
        <circle cx="16" cy="16" r="6.8" fill="#fff" />
        <circle cx="16" cy="16" r="5.3" fill="#4286f5" />
      </svg>
    </TaskButton>
    <TaskButton $tone="bright">
      <AppMark size={33} />
    </TaskButton>
    <TaskItem $w={62}>
      <svg width="30" height="28" viewBox="0 0 30 28">
        <path d="M2 2 H14 V16 H2z" fill="#e9e9ee" />
        <path d="M4 5 h2 M4 9 h2" stroke="#e02828" strokeWidth="2" />
        <path d="M8 5h5 M8 9h5 M4 13h9" stroke="#888" />
        <path d="M14 1 Q27 -1 28 15 L24 17 Q23 6 14 6z" fill="#2a4d8c" />
        <path d="M6 19 L18 10 L27 17 L16 27z" fill="#24262c" stroke="#5a5c65" />
      </svg>
    </TaskItem>
    <TaskButton $tone="blue">
      <svg width="34" height="32" viewBox="0 0 34 32">
        <path d="M3 18 Q4 6 17 5 Q30 7 28 17 Q27 21 22 20 Q18 20 20 25 Q19 30 13 29 Q2 27 3 18 Z" fill="#d9ebf4" stroke="#6b98b5" />
        <circle cx="9" cy="17" r="2.6" fill="#e03a2e" />
        <circle cx="13" cy="11" r="2.8" fill="#f0982a" />
        <circle cx="19" cy="9.4" r="2.8" fill="#47b14a" />
        <circle cx="11" cy="23" r="2.4" fill="#9d3fae" />
        <path d="M22 31 L27 12" stroke="#d58b2c" strokeWidth="3" strokeLinecap="round" />
        <path d="M25.6 11 L32 2 L29.4 12z" fill="#b27a44" />
      </svg>
    </TaskButton>
    <TaskButton>
      <HelpMark size={32} />
    </TaskButton>
    <Tray>
      <TrayIcon $gap={0}>
        <svg width="16" height="16" viewBox="0 0 16 16">
          <rect x=".5" y=".5" width="15" height="15" rx="5" fill="#d63a35" />
          <path d="M5 11 L6 7 L11 2.6 L13 5 L8.4 10z M4 4 Q2 8 5 12 Q9 14 12 11" stroke="#fff" fill="none" strokeWidth="1.4" />
        </svg>
      </TrayIcon>
      <ImeText>
        <Fit w={9}>A</Fit>
        <Fit w={17}>般</Fit>
      </ImeText>
      <TrayIcon $gap={3}>
        <svg width="17" height="17" viewBox="0 0 16 16">
          <path d="M1 6 H15 L13.5 15 H2.5z" fill="#f1b85a" />
          <path d="M2 1 L7 7 M6 0 L9 6" stroke="#d53c34" strokeWidth="2.4" />
          <path d="M14 2 L9 8" stroke="#4d9ad6" strokeWidth="3" />
          <path d="M1 7 H15 V9 H1z" fill="#fbe0a4" />
        </svg>
      </TrayIcon>
      <TrayIcon $gap={3}>
        <svg width="17" height="17" viewBox="0 0 16 16">
          <path d="M1 7 L9 2 L15 5 V11 L7 15 L1 12z" fill="#e8a650" />
          <path d="M1 7 L9 2 L15 5 L7 10z" fill="#f8cf82" />
          <path d="M5 5 Q7 0 10 3" stroke="#c9822d" fill="none" strokeWidth="1.5" />
        </svg>
      </TrayIcon>
      <TrayIcon $gap={5}>
        <HelpMark size={17} />
      </TrayIcon>
      <KeyState>
        <Fit w={20}>CAPS</Fit>
        <Fit w={20}>KANA</Fit>
      </KeyState>
      <TrayIcon $gap={6}>
        <svg width="10" height="20" viewBox="0 0 10 20">
          <path d="M3.5 .5 h5 v4 h-2 M1.5 2.5 h5 v4 h-5z" fill="none" stroke="#fff" />
          <path d="M1 13 h7 L4.5 16.5z" fill="#fff" />
        </svg>
      </TrayIcon>
      <TrayIcon $gap={10}>
        <svg width="8" height="5" viewBox="0 0 8 5">
          <path d="M0 4.5 H8 L4 .5z" fill="#fff" />
        </svg>
      </TrayIcon>
      <TrayIcon $gap={12}>
        <svg width="17" height="17" viewBox="0 0 16 16">
          <path d="M3 1 H13 V13 H3z" fill="#cdeaf8" stroke="#3f95cc" />
          <path d="M4 3 h4 v4 h-4z M9 4 h3 v3 h-3z M5 8 h6 v4 h-6z" fill="#4aa5dd" />
          <path d="M2 12 Q0 15 5 15 Q13 13 15 7" fill="none" stroke="#f2a52d" strokeWidth="2" />
        </svg>
      </TrayIcon>
      <TrayIcon $gap={8}>
        <svg width="15" height="16" viewBox="0 0 15 16">
          <path d="M1.5 1 V15" stroke="#fff" strokeWidth="1.6" />
          <path d="M2.5 2 H8 V4 H13.5 L12 6.5 L13.5 9 H7.5 V7.5 H2.5z" fill="#fff" />
        </svg>
      </TrayIcon>
      <TrayIcon $gap={8}>
        <svg width="16" height="13" viewBox="0 0 16 13">
          <path d="M1 11 h2v2h-2z M4 9h2v4h-2z M7 6h2v7h-2z" fill="#fff" />
          <path d="M10 3.5h2v9h-2z M13 1.5h2v11h-2z" fill="#333" stroke="#aaa" strokeWidth=".6" />
        </svg>
      </TrayIcon>
      <TrayIcon $gap={9}>
        <svg width="14" height="14" viewBox="0 0 14 14">
          <path d="M0 5 H3 L7 1 V13 L3 9 H0z" fill="#fff" />
          <path d="M9 4.5 Q10.4 7 9 9.5 M11 2.5 Q14 7 11 11.5" stroke="#ddd" fill="none" strokeWidth="1.2" />
        </svg>
      </TrayIcon>
      <TrayIcon $gap={10}>
        <svg width="15" height="17" viewBox="0 0 15 17">
          <path d="M.5 1.5 Q7 0 14.5 1.5 V9 Q13 14 7.5 16.5 Q2 14 .5 9z" fill="#d9202b" stroke="#f4dcdc" strokeWidth=".8" />
          <path d="M11 5.4 Q9 3.6 6.4 4.2 Q3.6 5.4 3.8 8.4 Q4.4 12 7.8 12 Q11 11.6 11 8.4 H7.6" fill="none" stroke="#fff" strokeWidth="1.8" />
        </svg>
      </TrayIcon>
      <Clock>
        <Fit w={34}>22:24</Fit>
        <Fit w={66}>2016/09/07</Fit>
      </Clock>
      <ShowDesktop />
    </Tray>
  </Tasks>
);

const App = () => (
  <Screen>
    <GlobalStyle />
    <Defs width="0" height="0">
      <defs>
        <linearGradient id="gradFill">
          <stop offset="0" stopColor="#f4f2f2" />
          <stop offset="1" stopColor="#262120" />
        </linearGradient>
        <linearGradient id="pageFill" x2="0" y2="1">
          <stop offset="0" stopColor="#b9b9b9" />
          <stop offset=".5" stopColor="#fff" />
        </linearGradient>
        <radialGradient id="orb" cy=".8">
          <stop offset="0" stopColor="#5cc7f0" />
          <stop offset=".6" stopColor="#1d6ca3" />
          <stop offset="1" stopColor="#3a5a78" />
        </radialGradient>
      </defs>
    </Defs>
    <TitleBar>
      <AppMark size={16} />
      <Fit w={67}>IllustStudio</Fit>
      <WindowButtons>
        <WinButton $w={29}>
          <svg width="13" height="6" viewBox="0 0 13 6">
            <rect x=".5" y=".5" width="11" height="4" fill="#fff" stroke="#555" />
          </svg>
        </WinButton>
        <WinButton $w={26}>
          <svg width="13" height="12" viewBox="0 0 13 12">
            <path d="M4 1 H11.5 V8 H4z M1.5 3.5 H8.5 V11 H1.5z" fill="#555" stroke="#fff" strokeWidth="1.6" />
          </svg>
        </WinButton>
        <WinButton $w={48} $close>
          <svg width="14" height="11" viewBox="0 0 14 11">
            <path d="M2 1 L11 10 M11 1 L2 10" stroke="#5b4a4a" strokeWidth="4.2" />
            <path d="M2.5 1.5 L10.5 9.5 M10.5 1.5 L2.5 9.5" stroke="#fff" strokeWidth="2.8" />
          </svg>
        </WinButton>
      </WindowButtons>
    </TitleBar>
    <MenuBar>
      {menus.map(([label, w, gap]) => (
        <MenuItem key={label} $gap={gap}>
          <Fit w={w}>{label}</Fit>
        </MenuItem>
      ))}
    </MenuBar>
    <ToolBar>
      <Grip />
      {["newFile", "open", "save", "saveAll"].map((n) => (
        <BarCell key={n}>
          <Icon name={n} />
        </BarCell>
      ))}
      <Grip $gap={3} />
      {["cut", "copy", "paste", "burst", "undo", "redo", "deselect"].map((n) => (
        <BarCell key={n}>
          <Icon name={n} />
        </BarCell>
      ))}
      <Grip $gap={4} />
      <BarSelect $w={109}>
        <svg width="23" height="21" viewBox="0 0 23 21" fill="none">
          {toolIcons.airbrush}
        </svg>
        <Fit w={56}>エアブラシ</Fit>
        {Marks.drop}
      </BarSelect>
      <Grip $gap={3} />
      <BarSelect $w={170}>
        <BrushDot />
        <Fit w={22}>強め</Fit>
        {Marks.drop}
      </BarSelect>
      <Grip $gap={3} />
      <ClipLogo>
        <svg width="37" height="17" viewBox="0 0 37 17">
          <text
            x="2"
            y="13.4"
            textLength="33"
            lengthAdjust="spacingAndGlyphs"
            fontFamily="Liberation Sans, sans-serif"
            fontWeight="bold"
            fontSize="14"
            fill="#fff"
            stroke="#12a5b8"
            strokeWidth="4"
            strokeLinejoin="round"
            paintOrder="stroke"
          >
            CLiP
          </text>
          <circle cx="21" cy="3.4" r="1.5" fill="#e5402b" />
        </svg>
      </ClipLogo>
    </ToolBar>
    <Workspace>
      <LeftDock />
      <FloatDock $w={217} $pad="0 6px 0 2px">
        <PanelTop>
          <PanelHeader title="カラーガイド" w={58} collapsed />
        </PanelTop>
        <DotGrip />
        <DockFoot $short>{Marks.expand}</DockFoot>
        <EdgeArrow $x={212} $y={15}>
          {Marks.left}
        </EdgeArrow>
      </FloatDock>
      <PresetWindow />
      <FloatDock $w={467} $pad="0 2px 0 5px" $right>
        <PanelTop>
          <PanelHeader title="素材" w={19} collapsed />
        </PanelTop>
        <DotGrip />
        <DockFoot $short $end>
          {Marks.expand}
        </DockFoot>
        <EdgeArrow $x={0} $y={15}>
          {Marks.right}
        </EdgeArrow>
      </FloatDock>
      <RightDock />
    </Workspace>
    <StatusBar>
      <StatusText>
        <Fit w={536}>[Ctrl] パス編集 / [Alt] スポイト | [Shift] 直線を引く / [Ctrl] + [Alt] ドラッグでブラシサイズ変更</Fit>
      </StatusText>
      <StatusIcons>
        <svg width="37" height="17" viewBox="0 0 37 17">
          <rect x=".5" y=".5" width="36" height="16" fill="#f2efef" stroke="#8b8b8b" />
          <path d="M1 4.5h36 M1 8.5h36 M1 12.5h36 M5.5 1v16 M10.5 1v16 M15.5 1v16 M20.5 1v16 M25.5 1v16 M30.5 1v16" stroke="#a2a2a2" />
        </svg>
        <svg width="17" height="16" viewBox="0 0 17 16">
          <circle cx="9.5" cy="7" r="6.5" fill="#6b5a50" />
          <path d="M5 11 L9 15.6 L11 11z" fill="#d69559" />
          <circle cx="7.5" cy="6.6" r="6.2" fill="#f3cfa2" />
          <path d="M7.5 1.6 v2.6 M5.6 5.8 h2.6 v4.4 M5.4 10.4 h4.6" stroke="#111" strokeWidth="2" fill="none" />
        </svg>
      </StatusIcons>
    </StatusBar>
    <TaskBar />
  </Screen>
);

/* ---------- styles ---------- */

const GlobalStyle = createGlobalStyle`
  * { box-sizing: border-box; }
  body { margin: 0; overflow: hidden; }
  svg { display: block; flex: none; }
`;

const Screen = styled.div`
  width: 1920px;
  height: 1080px;
  display: flex;
  flex-direction: column;
  overflow: hidden;
  background: #ababab;
  font-family: ${FONT};
  font-size: 12px;
  color: #111;
`;

const Defs = styled.svg`
  flex: none;
`;

const FitBox = styled.span`
  display: inline-block;
  flex: none;
  width: ${(p) => p.$w}px;
  white-space: nowrap;
`;

const FitInner = styled.span`
  display: inline-block;
  transform-origin: 0 50%;
`;

const TitleBar = styled.div`
  flex: none;
  height: 22px;
  display: flex;
  align-items: center;
  gap: 5px;
  border-bottom: 1px solid #1e1a1e;
  box-shadow: inset 0 -1px #b0a8ac;
  background:
    linear-gradient(rgba(0, 0, 0, 0.35), transparent 5px),
    linear-gradient(
      90deg,
      #c9c9c9 0,
      #bdbdbd 80px,
      #8f8f8f 190px,
      #3d3a3b 204px,
      #878586 214px,
      #777 385px,
      #4a2c2e 397px,
      #827f80 410px,
      #6b6a6b 560px,
      #2b2525 592px,
      #6f6f6f 604px,
      #191516 622px,
      #1c1718 715px,
      #451a1d 728px,
      #3e1a1c 960px,
      #1f1a1a 970px,
      #252020 1200px,
      #45202a 1212px,
      #553438 1300px,
      #46171c 1440px,
      #1e191a 1455px,
      #352d2c 1540px,
      #1f1a1a 1600px,
      #262222 1775px,
      #8b8686 1790px,
      #3c3737 1812px,
      #555 1920px
    );
`;

const WindowButtons = styled.div`
  display: flex;
  align-self: flex-start;
  margin: 0 2px 0 auto;
  height: 18px;
  border: 1px solid #c9c9c9;
  border-top: 0;
  border-radius: 0 0 5px 5px;
  overflow: hidden;
`;

const WinButton = styled.div`
  width: ${(p) => p.$w}px;
  display: flex;
  align-items: center;
  justify-content: center;
  border-right: 1px solid #2b2b2b;
  background: ${(p) =>
    p.$close
      ? "linear-gradient(#d9988c, #c7604d 45%, #a82a12 50%, #d2573a)"
      : "linear-gradient(#a9a9a9, #777 45%, #454545 50%, #777)"};
`;

const MenuBar = styled.div`
  flex: none;
  height: 20px;
  display: flex;
  align-items: center;
  padding-bottom: 2px;
  font-size: 13px;
  line-height: 18px;
  background: linear-gradient(#fff 0, #e9edf6 35%, #d6dcee 38%, #e4e8f7 100%);
  border-bottom: 1px solid #b3b8ca;
`;

const MenuItem = styled.div`
  margin-left: ${(p) => p.$gap - (p.$gap === 8 ? 1 : 0)}px;
`;

const ToolBar = styled.div`
  flex: none;
  height: 23px;
  display: flex;
  align-items: center;
  padding-left: 1px;
  background: ${FACE};
  font-size: 13px;
  line-height: 20px;
`;

const Grip = styled.div`
  width: 3px;
  height: 15px;
  margin: 0 1px 0 ${(p) => p.$gap || 0}px;
  background: repeating-linear-gradient(#8a8a8c 0 2px, transparent 2px 4px);
  background-size: 2px 100%;
  background-repeat: no-repeat;
`;

const BarCell = styled.div`
  width: 20px;
  height: 20px;
  margin-right: 2px;
  background: #eaeaec;
`;

const BarSelect = styled.div`
  width: ${(p) => p.$w}px;
  margin-left: 1px;
  display: flex;
  align-items: center;

  > svg:last-child {
    margin: 5px 0 0 auto;
  }
`;

const BrushDot = styled.div`
  width: 19px;
  height: 18px;
  margin: 0 4px 0 2px;
  background: radial-gradient(circle, #000 15%, #777 50%, #e8e8ea 72%);
`;

const ClipLogo = styled.div`
  padding: 0 1px;
  margin-left: 3px;
  border: 1px solid #dcdcde;
  border-radius: 3px;
  background: #fff;
`;

const Workspace = styled.div`
  flex: none;
  height: 951px;
  display: flex;
  align-items: flex-start;
  overflow: hidden;
`;

const LeftDockBox = styled.div`
  position: relative;
  width: 89px;
  height: 682px;
  padding: 12px 6px 0 2px;
  background: #999;
  border-bottom: 1px solid #777;
`;

const FloatDock = styled.div`
  position: relative;
  width: ${(p) => p.$w}px;
  height: 40px;
  padding: ${(p) => p.$pad};
  padding-top: 12px;
  background: #999;
  border-bottom: 1px solid #747474;
  ${(p) =>
    p.$right &&
    css`
      margin-left: auto;
      border-left: 1px solid #747474;
    `}
`;

const PanelTop = styled.div`
  background: #e7e7e9;
  border-radius: 3px 3px 0 0;
`;

const EdgeArrow = styled.div`
  position: absolute;
  left: ${(p) => p.$x}px;
  top: ${(p) => p.$y}px;
`;

const DockFoot = styled.div`
  display: flex;
  justify-content: ${(p) => (p.$end ? "flex-end" : "flex-start")};
  padding: ${(p) => (p.$short ? "2px 1px 0 1px" : "2px 1px")};
`;

const Dots = styled.div`
  height: 5px;
  display: flex;
  justify-content: center;
  gap: 2px;
  padding-top: 1px;

  i {
    width: 1px;
    height: 1px;
    background: #d8d8d8;
  }
`;

const Panel = styled.div`
  flex: none;
  height: ${(p) => p.$h}px;
  padding: 0 2px;
  overflow: hidden;
  background: #e7e7e9;
  border-radius: ${(p) => (p.$cut ? "3px 3px 0 0" : "3px")};
`;

const Header = styled.div`
  height: ${(p) => (p.$collapsed ? 11 : 13)}px;
  display: flex;
  padding: ${(p) => (p.$collapsed ? "0 6px 0 5px" : p.$small ? "0 4px 0 3px" : "0 4px 0 3px")};

  > svg {
    margin-top: 2px;
  }
`;

const HeaderTitle = styled.div`
  flex: 1;
  padding-left: 17px;
  font-size: 10px;
  line-height: 14px;
  height: 11px;
  font-family: ${JP};
  color: #555;
`;

const Minus = styled.div`
  width: 8px;
  height: 2px;
  margin-top: 4px;
  background: #4a4a4a;
`;

const MoreButton = styled.div`
  width: 15px;
  height: 11px;
  margin-left: ${(p) => (p.$small ? 0 : 10)}px;
  padding: 2px 0 0 2px;
  border: 1px solid #a9a9ab;
  border-top: 0;
`;

const Groups = styled.div`
  > div + div {
    margin-top: 2px;
  }
`;

const TabRow = styled.div`
  display: flex;
  height: ${(p) => (p.$h ? `${p.$h}px` : "auto")};

  ${Panel} > & {
    margin-top: 2px;
  }
`;

const TabCol = styled.div`
  flex: none;
  width: 15px;
  padding-top: 3px;
`;

const Tab = styled.div`
  position: relative;
  z-index: 1;
  width: ${(p) => (p.$off ? 15 : 16)}px;
  height: ${(p) => p.$h}px;
  overflow: hidden;
  padding: ${(p) => (p.$vertical ? "2px 2px 0 0" : "3px 2px 0 0")};
  border: 1px solid ${LINE};
  border-right: 0;
  border-radius: 3px 0 0 3px;
  background: ${(p) => (p.$off ? "#c2c2c4" : FACE)};
  color: #5c5c60;
  font-family: ${JP};
  font-size: 12px;
  line-height: 12px;
  word-break: break-all;
  ${(p) =>
    p.$vertical &&
    css`
      writing-mode: vertical-rl;
      line-height: 13px;
    `}
`;

const SideTab = styled.div`
  width: 15px;
  height: ${(p) => p.$h}px;
  display: flex;
  align-items: center;
  justify-content: center;
  writing-mode: vertical-rl;
  transform: rotate(180deg);
  border-radius: 0 3px 3px 0;
  background: #c2c2c4;
  color: #5c5c60;
  font-size: 11px;
  font-weight: bold;
  font-family: "DejaVu Sans", sans-serif;
`;

const boxed = css`
  border: 1px solid ${LINE};
  background: ${FACE};
`;

const ToolBox = styled.div`
  ${boxed}
  flex: 1;
  display: flex;
  flex-wrap: wrap;
  align-content: flex-start;
  padding: 0 13px 0 1px;
`;

const ToolCell = styled.div`
  width: 23px;
  height: 23px;
  background: ${(p) => (p.$active ? "#bfe0f6" : "transparent")};

  svg {
    filter: drop-shadow(1px 1px 1px rgba(0, 0, 0, 0.3));
  }
`;

const BrushPreview = styled.div`
  height: 109px;
  margin: 0 1px;
  padding-bottom: 2px;
  display: flex;
  align-items: flex-end;
  justify-content: center;
  border: 1px solid #6e6e6e;
  background: radial-gradient(
    circle at 50% 46%,
    #080808 0,
    #0c0c0c 6px,
    #3a3a3a 18px,
    #7c7c7e 29px,
    #b2b2b4 39px,
    #dadade 50px,
    #efeff2 62px
  );
  font-size: 10px;
  font-family: "DejaVu Sans", sans-serif;
  line-height: 8px;
`;

const PresetBox = styled.div`
  width: 247px;
  height: 908px;
  margin-left: 57px;
  padding: 0 2px;
  background: #e7e7e9;
`;

const PresetTools = styled.div`
  ${boxed}
  height: 22px;
  display: flex;
  align-items: center;
  padding-left: 1px;
`;

const SmallCell = styled.div`
  width: 18px;
  height: 18px;
  margin-right: 1px;
  display: flex;
  align-items: center;
  justify-content: center;
  background: #e9e9eb;
`;

const Separator = styled.div`
  width: 1px;
  height: 18px;
  margin: 0 ${(p) => p.$gap}px;
  background: #77777a;
`;

const PresetList = styled.div`
  ${boxed}
  height: 878px;
  margin-top: 2px;
  display: flex;
`;

const PresetRows = styled.div`
  flex: 1;
`;

const PresetRow = styled.div`
  height: 22px;
  display: flex;
  align-items: center;
  gap: 11px;
  padding: 1px 0 0 5px;
  border-bottom: 1px solid ${LINE};
  background: #fff;
  font-size: 10px;
  line-height: 18px;
  color: #000;
`;

const ScrollTrack = styled.div`
  width: 12px;
  margin-left: auto;
  display: flex;
  flex-direction: column;
  justify-content: space-between;
  border-left: 1px solid ${LINE};
  border-right: 1px solid ${LINE};
`;

const ScrollCap = styled.div`
  height: 12px;
  border-top: 1px solid ${LINE};
  border-bottom: 1px solid ${LINE};
`;

const RightDockBox = styled.div`
  position: relative;
  width: 267px;
  height: 951px;
  padding: 12px 2px 0 6px;
  background: #999;
`;

const NavTools = styled.div`
  ${boxed}
  height: 42px;
  display: flex;
`;

const NavLeft = styled.div`
  width: 193px;
  padding-left: 2px;
  border-right: 1px solid #a5a5a7;
`;

const NavLine = styled.div`
  height: 20px;
  display: flex;
  align-items: center;

  > svg + svg {
    margin-left: 2px;
  }
`;

const NavField = styled.div`
  width: 40px;
  height: 18px;
  margin: 0 2px;
  border: 1px solid #b5b5b7;
  border-radius: 2px;
  background: #ececee;
`;

const NavRight = styled.div`
  display: grid;
  grid-template-columns: 20px 20px;
  grid-auto-rows: 20px;
  padding-left: 2px;
`;

const CanvasBox = styled.div`
  ${boxed}
  flex: 1;
  padding: 4px 4px 4px 5px;

  > div {
    height: 100%;
    background: #fff;
  }
`;

const InfoBox = styled.div`
  ${boxed}
  flex: 1;
  display: grid;
  grid-template-columns: 73px 67px 80px;
  grid-auto-rows: 16px;
  padding: 3px 0 0 3px;
`;

const InfoCell = styled.div`
  display: flex;
  align-items: center;
  gap: 2px;
  font-family: "DejaVu Sans", sans-serif;
  font-size: 11px;

  > span {
    padding-top: 1px;
  }

  &:nth-child(3n) {
    padding-left: 6px;
  }
`;

const SetTools = styled.div`
  ${boxed}
  height: 22px;
  display: flex;
  align-items: center;
  padding-left: 1px;
`;

const SetSelect = styled.div`
  width: 129px;
  height: 18px;
  margin-right: 3px;
  display: flex;
  align-items: center;
  padding-left: 1px;
  border: 1px solid #d4d4d6;
  border-bottom-color: #98989a;
  background: #e9e9eb;
  font-size: 12px;
  line-height: 16px;

  > svg {
    margin: 4px 0 0 auto;
  }

  & ~ ${SmallCell} {
    margin-right: 2px;
  }
`;

const SwatchBox = styled.div`
  ${boxed}
  height: 39px;
  margin-top: 2px;
  display: flex;
`;

const SwatchGrid = styled.div`
  display: grid;
  grid-template-columns: repeat(20, 12px);
  grid-auto-rows: 12px;
  overflow: hidden;
`;

const Swatch = styled.div`
  background: ${(p) => p.$c};
  box-shadow:
    inset 0 -1px rgba(60, 40, 40, 0.65),
    inset -1px 0 rgba(60, 40, 40, 0.42);
`;

const SwatchRest = styled.div`
  grid-column: 1 / -1;
  background: linear-gradient(90deg, #eee8d8, #d9a98e 45%, #5a3b34 50%, #f1ead8 51%, #d99c7a 90%, #3c2825);
`;

const SwatchScroll = styled.div`
  width: 13px;
  border: 1px solid #8d8d8f;
  border-right: 0;
  overflow: hidden;
`;

const ChipBar = styled.div`
  ${boxed}
  height: 26px;
  display: flex;
  align-items: center;
  gap: 2px;
  padding-left: 2px;
`;

const checker = css`
  background: repeating-conic-gradient(#c6c6c6 0 25%, #fff 0 50%) 0 0 / 10px 10px;
`;

const Chip = styled.div`
  width: 50px;
  height: 20px;
  border: ${(p) => (p.$active ? "2px solid #3355ff" : "1px solid #626262")};
  box-shadow: ${(p) => (p.$active ? "none" : "inset 0 0 0 1px #fff")};
  background: ${(p) => p.$bg};
  ${(p) => p.$checker && checker}
`;

const CircleBox = styled.div`
  ${boxed}
  flex: 1;
`;

const WheelRow = styled.div`
  display: flex;
  height: 214px;
  padding: 8px 0 0 7px;

  > svg {
    margin-top: -6px;
  }
`;

const Wheel = styled.div`
  position: relative;
  width: 200px;
  height: 200px;
  display: flex;
  align-items: center;
  justify-content: center;
  border-radius: 50%;
  border: 1px solid #b5b5b7;
  background: conic-gradient(#ff0, #0f0, #0ff, #00f, #f0f, #f00, #ff0) border-box;
`;

const WheelHole = styled.div`
  width: 163px;
  height: 163px;
  display: flex;
  align-items: center;
  justify-content: center;
  border-radius: 50%;
  border: 1px solid #c9c9cb;
  background: ${FACE};
`;

const ShadeSquare = styled.div`
  width: 111px;
  height: 111px;
  border: 1px solid #777;
  background: linear-gradient(to top, #000, transparent), linear-gradient(to right, #fff, #f00);
`;

const HueMark = styled.div`
  position: absolute;
  left: 9px;
  top: 50px;
  width: 21px;
  height: 7px;
  border: 1px solid #111;
  transform: rotate(30deg);
`;

const ShadeMark = styled.div`
  position: absolute;
  left: 40px;
  top: 40px;
  width: 8px;
  height: 8px;
  border: 2px solid #000;
  border-radius: 50%;
`;

const AlphaBar = styled.div`
  width: 12px;
  height: 196px;
  margin: 2px 0 0 6px;
  border: 1px solid #666;
  background:
    linear-gradient(#fff 5%, rgba(255, 255, 255, 0)),
    repeating-conic-gradient(#bdbdbd 0 25%, #fff 0 50%) 0 0 / 10px 10px;
`;

const Values = styled.div`
  display: flex;
  justify-content: flex-end;
  gap: 2px;
  padding-right: 12px;
`;

const Value = styled.div`
  display: flex;
  align-items: center;
  gap: 1px;
  height: 11px;
  font-family: "Liberation Mono", monospace;
  font-size: 13px;
  font-weight: bold;
  line-height: 11px;
`;

const ValueChip = styled.div`
  width: 8px;
  height: 8px;
  border: 1px solid #666;
  background: ${(p) => p.$c || "repeating-conic-gradient(#ccc 0 25%, #fff 0 50%)"};
`;

const LayerTools = styled.div`
  ${boxed}
  height: 22px;
  display: flex;
  align-items: center;
  padding-left: 1px;
`;

const BlendBar = styled.div`
  ${boxed}
  height: 22px;
  margin-top: 2px;
  padding: 1px;
  display: flex;
  background: #f8f8fa;
`;

const BlendMode = styled.div`
  width: 126px;
  background: #e3e3e5;
`;

const Opacity = styled.div`
  flex: 1;
  padding-top: 4px;
  border-bottom: 1px solid ${LINE};

  > div {
    width: 110px;
    height: 10px;
    background: #dcdcde;
  }
`;

const ListBox = styled.div`
  ${boxed}
  flex: 1;
  display: flex;
`;

const DockStrip = styled.div`
  height: 12px;
  display: flex;
  align-items: center;
  gap: 2px;
  border-top: 1px solid #808080;
  border-bottom: 1px solid #777;
`;

const StripBar = styled.div`
  width: 229px;
  height: 10px;
  margin-left: 6px;
  display: flex;
  justify-content: center;
  background: linear-gradient(#f1f1f1 50%, #d3d5d4 50%);
  font-family: ${JP};
  font-size: 8px;
  line-height: 10px;
  color: #000;
`;

const StatusBar = styled.div`
  flex: none;
  height: 24px;
  display: flex;
  border-top: 1px solid #8a8a8a;
  box-shadow: inset 0 1px #fff, inset 0 -1px #fff;
  background: #f0eded;
`;

const StatusText = styled.div`
  margin-left: 129px;
  padding-left: 4px;
  border-left: 1px solid #d8d5d5;
  font-size: 12px;
  line-height: 24px;
`;

const StatusIcons = styled.div`
  width: 90px;
  margin: 0 1px 0 auto;
  display: flex;
  gap: 2px;
  padding: 4px 0 0 4px;
  border-left: 1px solid #d8d5d5;
  border-right: 1px solid #d8d5d5;
`;

const Tasks = styled.div`
  flex: none;
  height: 40px;
  display: flex;
  align-items: center;
  border-top: 1px solid #1a1718;
  box-shadow: inset 0 1px #8c8485;
  background: linear-gradient(
    90deg,
    #0d0c0c 0,
    #141112 430px,
    #3a1618 556px,
    #431b1d 640px,
    #512427 715px,
    #272322 724px,
    #2a2524 840px,
    #181212 960px,
    #4a2023 968px,
    #502629 1040px,
    #3f1719 1200px,
    #1a1514 1210px,
    #2a2424 1300px,
    #1c1716 1440px,
    #3d1216 1450px,
    #3a1216 1670px,
    #191516 1682px,
    #141314 1800px,
    #151515 1920px
  );
`;

const TaskItem = styled.div`
  width: ${(p) => p.$w}px;
  display: flex;
  justify-content: center;
`;

const taskTones = {
  bright: "linear-gradient(135deg, #d5d5d5, #8f8f8f 50%, #a5a5a5)",
  blue: "linear-gradient(135deg, #b5ccd4, #6f97ab 50%, #8fb9cf)",
  plain: "linear-gradient(135deg, rgba(255,255,255,.42), rgba(255,255,255,.14) 45%, rgba(255,255,255,.1))",
};

const TaskButton = styled.div`
  width: 58px;
  height: 38px;
  margin: 1px 3px 0 1px;
  display: flex;
  align-items: center;
  justify-content: center;
  border: 1px solid #9a9696;
  border-radius: 3px;
  background: ${(p) => taskTones[p.$tone || "plain"]};
`;

const Tray = styled.div`
  margin-left: auto;
  height: 40px;
  display: flex;
  align-items: center;
  color: #fff;
`;

const TrayIcon = styled.div`
  margin-left: ${(p) => p.$gap}px;
`;

const ImeText = styled.div`
  display: flex;
  gap: 4px;
  margin: 0 -1px 4px 10px;
  font-family: ${JP};
  font-size: 17px;
  line-height: 20px;
`;

const KeyState = styled.div`
  display: flex;
  flex-direction: column;
  margin: 0 0 2px 6px;
  font-size: 8px;
  font-weight: bold;
  line-height: 11px;
`;

const Clock = styled.div`
  width: 66px;
  margin: 0 13px 0 19px;
  display: flex;
  flex-direction: column;
  align-items: center;
  font-size: 12px;
  line-height: 17px;
`;

const ShowDesktop = styled.div`
  width: 22px;
  height: 38px;
  margin-right: 1px;
  border: 1px solid #6c6868;
  background: linear-gradient(135deg, #3c3a3a, #111 60%);
`;

export default App;
